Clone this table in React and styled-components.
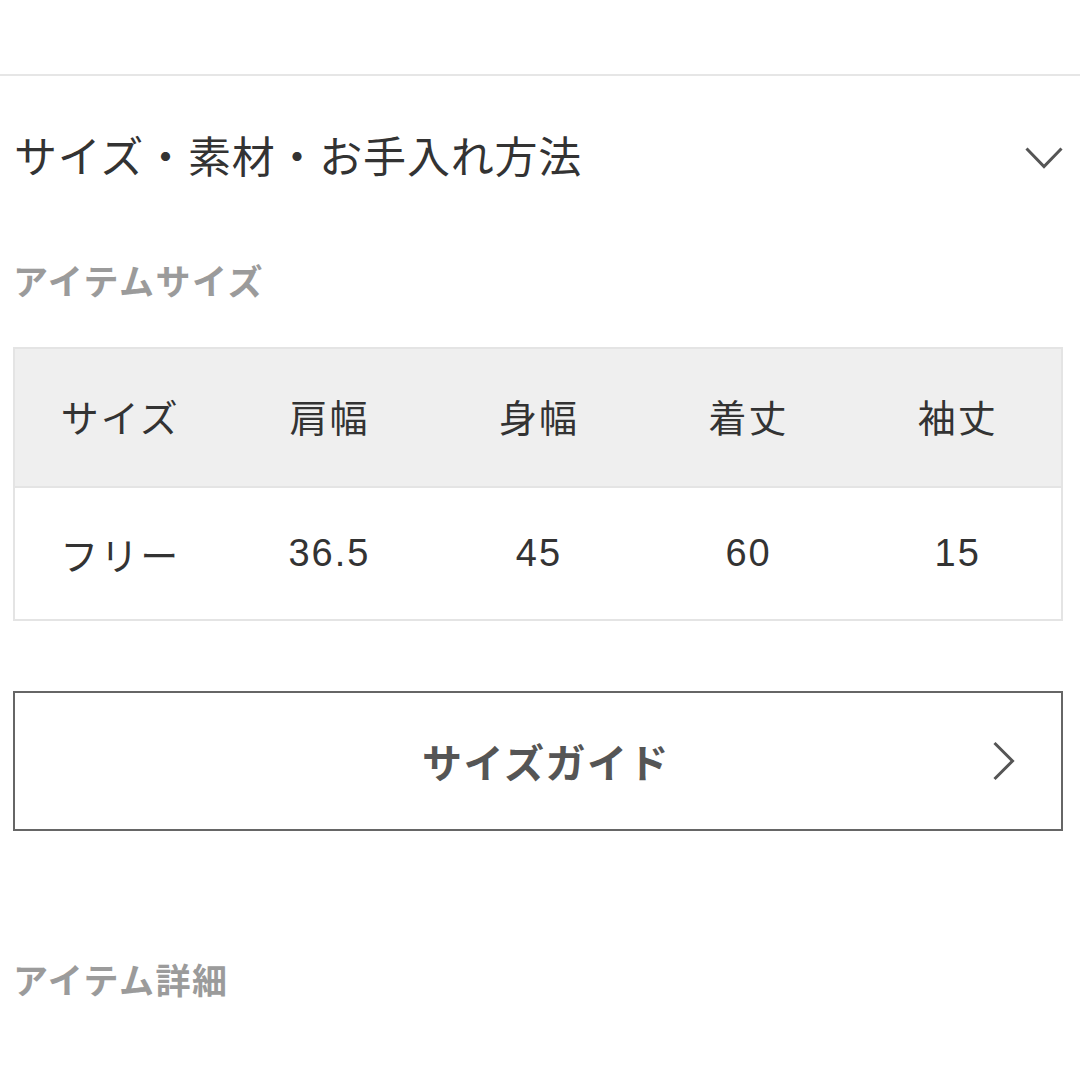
import styled, { createGlobalStyle } from "styled-components";

const GlobalStyle = createGlobalStyle`
  body {
    margin: 0;
    background: #fff;
    font-family: "Liberation Sans", "Noto Sans CJK JP", sans-serif;
    color: #333;
  }
`;

const Page = styled.div`
  padding-top: 74px;
`;

const Divider = styled.div`
  height: 2px;
  background: #e6e6e6;
`;

const Content = styled.div`
  padding: 0 17px 0 13px;
`;

const AccordionHead = styled.div`
  height: 164px;
  display: flex;
  align-items: center;
  justify-content: space-between;
  padding-left: 1px;
  > h2 {
    margin: 0;
    font-size: 43px;
    letter-spacing: 0.8px;
    font-weight: 400;
    color: #333;
    line-height: 1;
  }
`;

const SectionLabel = styled.h3`
  margin: ${(p) => p.$top}px 0 0;
  font-size: 35px;
  letter-spacing: 1.5px;
  line-height: 42px;
  font-weight: 700;
  color: #9b9b9b;
`;

const SizeTable = styled.table`
  margin-top: 43px;
  width: 100%;
  border-collapse: collapse;
  border: 2px solid #e4e4e4;
  table-layout: fixed;
`;

const HeadCell = styled.th`
  height: 133px;
  background: #efefef;
  font-size: 38px;
  letter-spacing: 2px;
  font-weight: 400;
  color: #333;
  text-align: center;
  border-bottom: 2px solid #e4e4e4;
  padding: 0 0 4px 2px;
`;

const BodyCell = styled.td`
  height: 131px;
  font-size: 38px;
  letter-spacing: 2px;
  color: #333;
  text-align: center;
  padding: 0 0 0 2px;
`;

const GuideButton = styled.button`
  margin-top: 70px;
  width: 100%;
  height: 140px;
  position: relative;
  display: flex;
  align-items: center;
  justify-content: center;
  background: #fff;
  border: 2px solid #666;
  font-family: inherit;
  font-size: 40px;
  letter-spacing: 1.5px;
  font-weight: 700;
  color: #555;
  padding: 0 0 0 16px;
  > svg {
    position: absolute;
    right: 46px;
    top: 50%;
    transform: translateY(-50%);
  }
`;

const heads = ["サイズ", "肩幅", "身幅", "着丈", "袖丈"];
const values = ["フリー", "36.5", "45", "60", "15"];

export default function App() {
  return (
    <Page>
      <GlobalStyle />
      <Divider />
      <Content>
        <AccordionHead>
          <h2>サイズ・素材・お手入れ方法</h2>
          <svg width="38" height="22" viewBox="0 0 38 22">
            <polyline
              points="1.5,1.5 19,19.5 36.5,1.5"
              fill="none"
              stroke="#555"
              strokeWidth="3"
            />
          </svg>
        </AccordionHead>
        <SectionLabel $top={22}>アイテムサイズ</SectionLabel>
        <SizeTable>
          <thead>
            <tr>
              {heads.map((h) => (
                <HeadCell key={h}>{h}</HeadCell>
              ))}
            </tr>
          </thead>
          <tbody>
            <tr>
              {values.map((v) => (
                <BodyCell key={v}>{v}</BodyCell>
              ))}
            </tr>
          </tbody>
        </SizeTable>
        <GuideButton>
          サイズガイド
          <svg width="22" height="39" viewBox="0 0 22 39">
            <polyline
              points="1.5,1.5 19.5,19.5 1.5,37.5"
              fill="none"
              stroke="#555"
              strokeWidth="3"
            />
          </svg>
        </GuideButton>
        <SectionLabel $top={130}>アイテム詳細</SectionLabel>
      </Content>
    </Page>
  );
}
